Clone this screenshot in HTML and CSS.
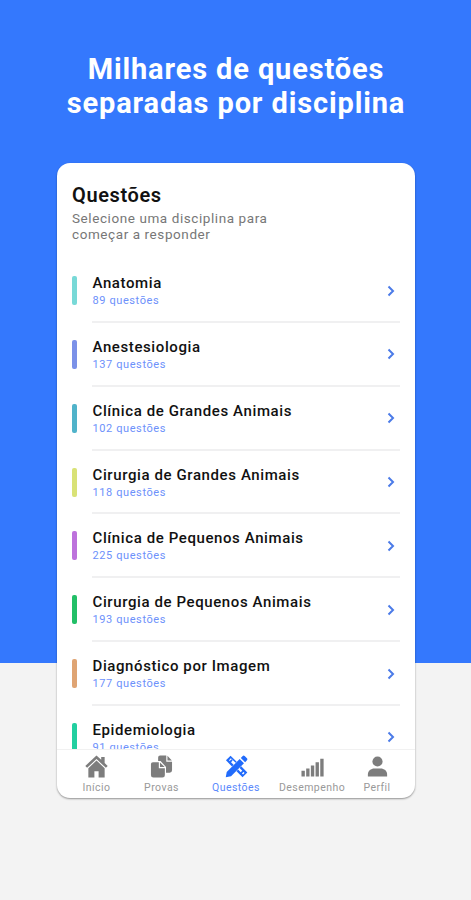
FILE: index.html
```html
<!DOCTYPE html>
<html lang="pt-BR">
<head>
<meta charset="utf-8">
<title>Questões</title>
<link rel="stylesheet" href="styles.css">
</head>
<body>
<h1 class="headline">Milhares de questões<br><span class="headline-second">separadas por disciplina</span></h1>
<main class="card">
  <header class="intro">
    <h2 class="intro-title">Questões</h2>
    <p class="intro-text">Selecione uma disciplina para<br>começar a responder</p>
  </header>
  <ul class="list">
    <li class="row"><span class="bar aqua"></span><div class="body"><div><h3 class="name">Anatomia</h3><p class="count">89 questões</p></div><svg class="chevron" viewBox="0 0 8 12"><path d="M1.5 1.5 6 6 1.5 10.5"/></svg></div></li>
    <li class="row"><span class="bar indigo"></span><div class="body"><div><h3 class="name">Anestesiologia</h3><p class="count">137 questões</p></div><svg class="chevron" viewBox="0 0 8 12"><path d="M1.5 1.5 6 6 1.5 10.5"/></svg></div></li>
    <li class="row"><span class="bar teal"></span><div class="body"><div><h3 class="name">Clínica de Grandes Animais</h3><p class="count">102 questões</p></div><svg class="chevron" viewBox="0 0 8 12"><path d="M1.5 1.5 6 6 1.5 10.5"/></svg></div></li>
    <li class="row"><span class="bar lime"></span><div class="body"><div><h3 class="name">Cirurgia de Grandes Animais</h3><p class="count">118 questões</p></div><svg class="chevron" viewBox="0 0 8 12"><path d="M1.5 1.5 6 6 1.5 10.5"/></svg></div></li>
    <li class="row"><span class="bar purple"></span><div class="body"><div><h3 class="name">Clínica de Pequenos Animais</h3><p class="count">225 questões</p></div><svg class="chevron" viewBox="0 0 8 12"><path d="M1.5 1.5 6 6 1.5 10.5"/></svg></div></li>
    <li class="row"><span class="bar green"></span><div class="body"><div><h3 class="name">Cirurgia de Pequenos Animais</h3><p class="count">193 questões</p></div><svg class="chevron" viewBox="0 0 8 12"><path d="M1.5 1.5 6 6 1.5 10.5"/></svg></div></li>
    <li class="row"><span class="bar orange"></span><div class="body"><div><h3 class="name">Diagnóstico por Imagem</h3><p class="count">177 questões</p></div><svg class="chevron" viewBox="0 0 8 12"><path d="M1.5 1.5 6 6 1.5 10.5"/></svg></div></li>
    <li class="row"><span class="bar mint"></span><div class="body"><div><h3 class="name">Epidemiologia</h3><p class="count">91 questões</p></div><svg class="chevron" viewBox="0 0 8 12"><path d="M1.5 1.5 6 6 1.5 10.5"/></svg></div></li>
  </ul>
  <nav class="tabs">
    <a class="tab"><svg class="icon" viewBox="0 0 24 24"><path d="M12 .5.3 11.400l1.900 2L12 4.300l9.800 9.100 1.900-2L20.500 8.400V2h-3.600v3z"/><path d="M12 5.800 3.500 13.700V23.500h6.300V17h4.400v6.500h6.300v-9.800z"/></svg><span>Início</span></a>
    <a class="tab"><svg class="icon" viewBox="0 0 24 24"><path d="M8.500 2.500a2 2 0 0 1 2-2h6.500V7h6v9a2.500 2.500 0 0 1-2.500 2.500h-3.800v-6L11 6.300H8.500zM18.200.8 22.800 5.800h-4.600z"/><path d="M1 9.500a2 2 0 0 1 2-2h6.200v6.300h6.300v7.200a2.500 2.500 0 0 1-2.500 2.500H3.500A2.500 2.500 0 0 1 1 21zM10.400 7.700l4.900 4.900h-4.900z"/></svg><span>Provas</span></a>
    <a class="tab active"><svg class="icon" viewBox="0 0 24 24"><path d="M15.300 4.200 19.800 8.700 6.300 22.200.8 23.200l1-5.500zM16.500 3l2-2q1-.8 2 .1l2.400 2.400q.9 1 0 2l-1.900 2z"/><path d="M5.800.800 1 5.600l6.300 6.300L9 10.200 6.300 7.500l1.700-1.700-1.300-1.300-1.700 1.700-.8-.8L6.100 3.500l5 4.600 1.100-1.100zM16.900 11.800l-1.700 1.700 5.200 5.200-1.600 1.600-1.100-1.100 1.700-1.700-1.300-1.300-1.700 1.700-2.700-2.700-1.700 1.700 6.300 6.300 5-5z"/></svg><span>Questões</span></a>
    <a class="tab"><svg class="icon" viewBox="0 0 24 24"><path d="M.5 16.500h3.500v6H.5zM5.400 14h3.500v8.500H5.400zM10.300 11h3.500v11.500h-3.500zM15.200 7.500h3.500v15h-3.500zM20.100 4h3.500v18.500h-3.500z"/></svg><span>Desempenho</span></a>
    <a class="tab"><svg class="icon icon-person" viewBox="0 0 24 24"><circle cx="12" cy="6.300" r="5.800"/><path d="M1 23.500V21C1 17 4.500 14.300 8.500 14.300h7c4 0 7.500 2.700 7.500 6.700v2.500z"/></svg><span>Perfil</span></a>
  </nav>
</main>
</body>
</html>
```
FILE: styles.css
```css
* { box-sizing: border-box; margin: 0; padding: 0; }
body {
  width: 471px;
  height: 900px;
  overflow: hidden;
  padding-top: 52px;
  background: linear-gradient(#3478fd 663px, #f3f3f3 663px);
  font-family: Roboto, "Liberation Sans", sans-serif;
}
.headline {
  height: 111px;
  padding-left: 1px;
  color: #fff;
  font-size: 29px;
  line-height: 34px;
  font-weight: 700;
  letter-spacing: .87px;
  text-align: center;
}
.card {
  display: flex;
  flex-direction: column;
  width: 358px;
  height: 635px;
  margin-left: 57px;
  overflow: hidden;
  border-radius: 13px;
  background: #fff;
  box-shadow: 0 1px 2px rgba(0, 0, 0, .4);
}
.intro { height: 96px; padding: 20px 15px 0; }
.intro-title { font-size: 20px; line-height: 24px; font-weight: 600; letter-spacing: .6px; color: #111; }
.intro-text { padding-top: 3px; font-size: 13.5px; line-height: 16px; letter-spacing: .58px; color: #777; }
.list { flex: 1; min-height: 0; overflow: hidden; list-style: none; }
.row { display: flex; gap: 15px; height: 63.85px; padding: 0 15px; }
.bar { width: 5px; height: 29px; margin-top: 17px; border-radius: 2px; }
.aqua { background: #78d9d7; }
.indigo { background: #7b91e8; }
.teal { background: #50b3ca; }
.lime { background: #d9e276; }
.purple { background: #bd72dc; }
.green { background: #22bf67; }
.orange { background: #dfa473; }
.mint { background: #22cfa0; }
.body {
  display: flex;
  flex: 1;
  justify-content: space-between;
  padding: 15px 5px 0 .5px;
  border-bottom: 2px solid #f0f0f1;
}
.name { font-size: 15px; line-height: 18px; font-weight: 500; letter-spacing: .6px; color: #111; }
.count { padding-top: 2px; font-size: 11px; line-height: 14px; letter-spacing: .6px; color: #6d91fb; }
.chevron { width: 8px; height: 12px; margin-top: 10.500px; fill: none; stroke: #4b7be8; stroke-width: 2; }
.tabs {
  display: grid;
  grid-template-columns: 65px 65px 84px 68px 62px;
  height: 49px;
  padding: 5px 7px 0;
  border-top: 1px solid #f1f1f1;
}
.tab {
  display: flex;
  flex-direction: column;
  align-items: center;
  gap: 3px;
  font-size: 10.5px;
  line-height: 13px;
  letter-spacing: .45px;
  white-space: nowrap;
  color: #999;
}
.icon { width: 23px; height: 23px; fill: #7d7d7d; }
.icon-person { width: 21px; }
.active { color: #5b89fc; }
.active .icon { fill: #216bfb; }
```
